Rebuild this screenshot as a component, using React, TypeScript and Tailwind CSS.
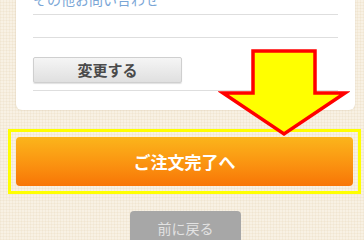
const FONT = '"Noto Sans CJK JP", "Liberation Sans", sans-serif';

export default function App() {
    return (
        <div
            className="relative w-[364px] h-[240px] overflow-hidden bg-[#f8f1e4]"
            style={{
                fontFamily: FONT,
                backgroundImage:
                    'repeating-linear-gradient(0deg, rgba(225,205,170,0.18) 0 1px, transparent 1px 3px), repeating-linear-gradient(90deg, rgba(225,205,170,0.18) 0 1px, transparent 1px 3px)',
            }}
        >
            {/* Card */}
            <div className="ml-[16px] mr-[9px] -mt-[11px] rounded-b-[6px] bg-white px-[17px] pb-[19px] shadow-[0_0_2px_rgba(180,160,120,0.35)]">
                <div className="h-[26px] border-b border-[#dedede] text-[14px] leading-[20px] text-[#7aa6d6]">
                    その他お問い合わせ
                </div>
                <div className="h-[23px] border-b border-[#dedede]" />
                <div className="border-b border-[#dedede] pt-[19px] pb-[7px]">
                    <button className="flex h-[26px] w-[149px] items-center justify-center rounded-[2px] border border-[#cfcfcf] bg-gradient-to-b from-[#f5f5f5] to-[#e0e0e0] text-[15px] font-bold text-[#4a4a4a] shadow-[0_1px_1px_rgba(0,0,0,0.12)]">
                        変更する
                    </button>
                </div>
            </div>

            {/* Highlighted submit */}
            <div className="mt-[19px] ml-[8px] mr-[3px] border-[3px] border-[#ffff00] p-[5px]">
                <button className="flex h-[49px] w-full items-center justify-center rounded-[4px] bg-gradient-to-b from-[#fbb51b] to-[#f87506] text-[17px] font-bold text-white">
                    ご注文完了へ
                </button>
            </div>

            <div className="mt-[17px] flex justify-center pl-[7px]">
                <button className="h-[36px] w-[111px] rounded-[4px] bg-[#a7a7a7] pb-[2px] text-[14px] text-[#e2e2e2]">
                    前に戻る
                </button>
            </div>

            {/* Arrow overlay */}
            <svg className="absolute left-[218px] top-[46px]" width="132" height="94" viewBox="0 0 132 94">
                <polygon
                    points="35,5 97,5 97,47 127,47 66,88 5,47 35,47"
                    fill="#ffff00"
                    stroke="#ff0000"
                    strokeWidth="3.5"
                    strokeLinejoin="miter"
                />
            </svg>
        </div>
    );
}
